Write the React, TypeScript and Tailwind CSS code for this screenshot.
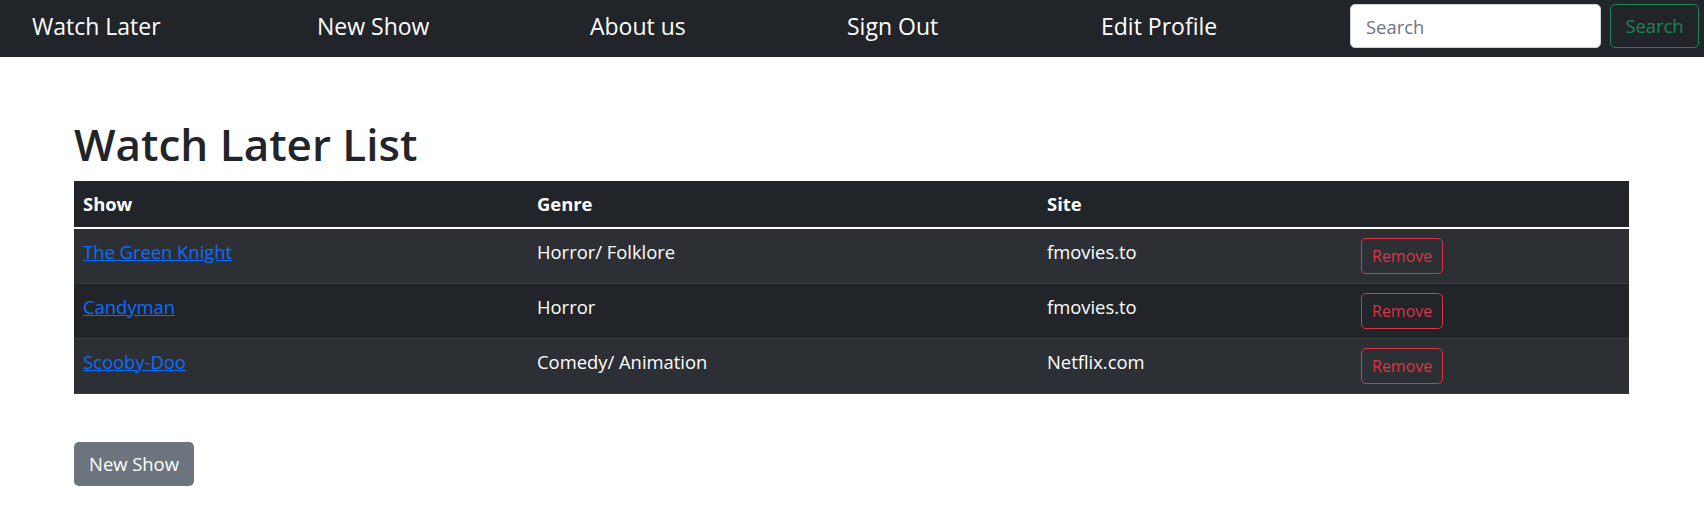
import React from 'react'

const shows = [
  { title: 'The Green Knight', genre: 'Horror/ Folklore', site: 'fmovies.to' },
  { title: 'Candyman', genre: 'Horror', site: 'fmovies.to' },
  { title: 'Scooby-Doo', genre: 'Comedy/ Animation', site: 'Netflix.com' },
]

const font = { fontFamily: '"Open Sans", "Noto Sans", sans-serif' }

const NavBar = () => {
  return (
    <nav className="h-[57px] bg-[#212529] flex items-start text-white">
      <div className="flex items-center pl-[32px] pt-[9px] text-[23px] leading-[34px]">
        <a href="#" className="w-[285px]">Watch Later</a>
        <a href="#" className="w-[273px]">New Show</a>
        <a href="#" className="w-[257px]">About us</a>
        <a href="#" className="w-[254px]">Sign Out</a>
        <a href="#">Edit Profile</a>
      </div>
      <form className="ml-auto mr-[5px] mt-[4px] flex gap-[9px]" onSubmit={(e) => e.preventDefault()}>
        <input
          type="search"
          placeholder="Search"
          className="w-[251px] h-[44px] rounded-[5px] border border-[#ced4da] bg-white px-[15px] text-[18.4px] text-[#212529] placeholder:text-[#6c757d] outline-none"
        />
        <button
          type="submit"
          className="w-[89px] h-[44px] rounded-[5px] border border-[#198754] text-[#198754] text-[18.4px]"
        >
          Search
        </button>
      </form>
    </nav>
  )
}

const cell = 'align-top px-[9px] py-[9px] border-b border-[#373b3e]'

export default function App() {
  return (
    <div className="min-h-[519px] bg-white text-[#212529]" style={font}>
      <NavBar />
      <div className="w-[1555px] ml-[74px]">
        <h1 className="mt-[60px] mb-[9px] text-[44px] leading-[55px] font-semibold">Watch Later List</h1>
        <table className="w-full table-fixed border-separate border-spacing-0 bg-[#212529] text-[18.4px] leading-[27.6px] text-white">
          <colgroup>
            <col className="w-[454px]" />
            <col className="w-[510px]" />
            <col className="w-[314px]" />
            <col />
          </colgroup>
          <thead>
            <tr>
              <th className="text-left font-bold px-[9px] py-[9px] border-b-2 border-white">Show</th>
              <th className="text-left font-bold px-[9px] py-[9px] border-b-2 border-white">Genre</th>
              <th className="text-left font-bold px-[9px] py-[9px] border-b-2 border-white">Site</th>
              <th className="px-[9px] py-[9px] border-b-2 border-white"></th>
            </tr>
          </thead>
          <tbody>
            {shows.map((s, i) => {
              const row = `${cell} ${i % 2 === 0 ? 'bg-[#2c3034]' : 'bg-[#212529]'}`
              return (
                <tr key={s.title}>
                  <td className={row}>
                    <a href="#" className="text-[#0d6efd] underline">{s.title}</a>
                  </td>
                  <td className={row}>{s.genre}</td>
                  <td className={row}>{s.site}</td>
                  <td className={row}>
                    <button className="h-[36px] px-[10px] rounded-[5px] border border-[#dc3545] text-[#dc3545] text-[16px] leading-[24px]">
                      Remove
                    </button>
                  </td>
                </tr>
              )
            })}
          </tbody>
        </table>
        <button className="mt-[48px] w-[120px] h-[44px] rounded-[5px] bg-[#6c757d] text-white text-[18.4px]">
          New Show
        </button>
      </div>
    </div>
  )
}
